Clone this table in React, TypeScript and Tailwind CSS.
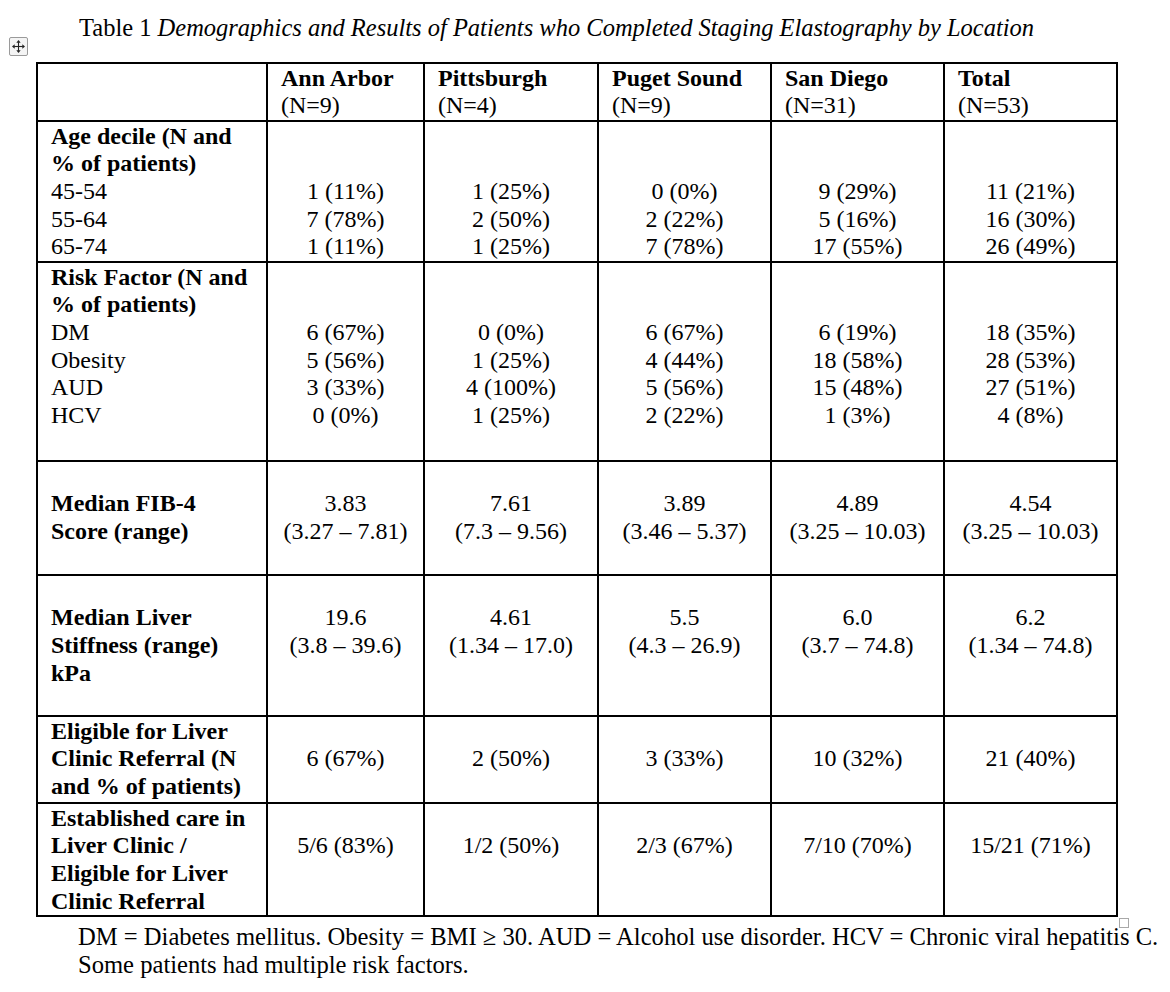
const serif = "font-['Liberation_Serif','Times_New_Roman',serif]";

type Line = string | { b: string } | null;

interface Row {
  h: string;
  label: Line[];
  data: Line[][];
}

const cols = ['w-[230px]', 'w-[157px]', 'w-[174px]', 'w-[173px]', 'w-[173px]', 'w-[173px]'];

const header = [
  ['Ann Arbor', '(N=9)'],
  ['Pittsburgh', '(N=4)'],
  ['Puget Sound', '(N=9)'],
  ['San Diego', '(N=31)'],
  ['Total', '(N=53)'],
];

const rows: Row[] = [
  {
    h: 'h-[141px]',
    label: [{ b: 'Age decile (N and' }, { b: '% of patients)' }, '45-54', '55-64', '65-74'],
    data: [
      [null, null, '1 (11%)', '7 (78%)', '1 (11%)'],
      [null, null, '1 (25%)', '2 (50%)', '1 (25%)'],
      [null, null, '0 (0%)', '2 (22%)', '7 (78%)'],
      [null, null, '9 (29%)', '5 (16%)', '17 (55%)'],
      [null, null, '11 (21%)', '16 (30%)', '26 (49%)'],
    ],
  },
  {
    h: 'h-[199px]',
    label: [{ b: 'Risk Factor (N and' }, { b: '% of patients)' }, 'DM', 'Obesity', 'AUD', 'HCV'],
    data: [
      [null, null, '6 (67%)', '5 (56%)', '3 (33%)', '0 (0%)'],
      [null, null, '0 (0%)', '1 (25%)', '4 (100%)', '1 (25%)'],
      [null, null, '6 (67%)', '4 (44%)', '5 (56%)', '2 (22%)'],
      [null, null, '6 (19%)', '18 (58%)', '15 (48%)', '1 (3%)'],
      [null, null, '18 (35%)', '28 (53%)', '27 (51%)', '4 (8%)'],
    ],
  },
  {
    h: 'h-[114px]',
    label: [null, { b: 'Median FIB-4' }, { b: 'Score (range)' }],
    data: [
      [null, '3.83', '(3.27 – 7.81)'],
      [null, '7.61', '(7.3 – 9.56)'],
      [null, '3.89', '(3.46 – 5.37)'],
      [null, '4.89', '(3.25 – 10.03)'],
      [null, '4.54', '(3.25 – 10.03)'],
    ],
  },
  {
    h: 'h-[141px]',
    label: [null, { b: 'Median Liver' }, { b: 'Stiffness (range)' }, { b: 'kPa' }],
    data: [
      [null, '19.6', '(3.8 – 39.6)'],
      [null, '4.61', '(1.34 – 17.0)'],
      [null, '5.5', '(4.3 – 26.9)'],
      [null, '6.0', '(3.7 – 74.8)'],
      [null, '6.2', '(1.34 – 74.8)'],
    ],
  },
  {
    h: 'h-[87px]',
    label: [{ b: 'Eligible for Liver' }, { b: 'Clinic Referral (N' }, { b: 'and % of patients)' }],
    data: [
      [null, '6 (67%)'],
      [null, '2 (50%)'],
      [null, '3 (33%)'],
      [null, '10 (32%)'],
      [null, '21 (40%)'],
    ],
  },
  {
    h: 'h-[107px]',
    label: [
      { b: 'Established care in' },
      { b: 'Liver Clinic /' },
      { b: 'Eligible for Liver' },
      { b: 'Clinic Referral' },
    ],
    data: [
      [null, '5/6 (83%)'],
      [null, '1/2 (50%)'],
      [null, '2/3 (67%)'],
      [null, '7/10 (70%)'],
      [null, '15/21 (71%)'],
    ],
  },
];

function Lines({ lines }: { lines: Line[] }) {
  return (
    <>
      {lines.map((l, i) => {
        if (l === null) return <div key={i}>&nbsp;</div>;
        if (typeof l === 'string') return <div key={i}>{l}</div>;
        return (
          <div key={i} className="font-bold">
            {l.b}
          </div>
        );
      })}
    </>
  );
}

function MoveHandle() {
  return (
    <div className="absolute left-[9px] top-[37px] flex h-[19px] w-[19px] items-center justify-center rounded-[2px] border border-[#9a9a9a] bg-[#f4f4f4]">
      <svg width="13" height="13" viewBox="0 0 12 12" fill="#222">
        <rect x="5.5" y="2" width="1" height="8" />
        <rect x="2" y="5.5" width="8" height="1" />
        <polygon points="6,0 4,2.5 8,2.5" />
        <polygon points="6,12 4,9.5 8,9.5" />
        <polygon points="0,6 2.5,4 2.5,8" />
        <polygon points="12,6 9.5,4 9.5,8" />
      </svg>
    </div>
  );
}

export default function App() {
  return (
    <div className={`relative h-[992px] w-[1170px] bg-white text-black ${serif} text-[24px] leading-[27.6px]`}>
      <MoveHandle />

      <p className="pl-[79px] pt-[14px] text-[24.5px]">
        Table 1 <i>Demographics and Results of Patients who Completed Staging Elastography by Location</i>
      </p>

      <div className="relative ml-[36px] mt-[20px] w-[1082px]">
        <table className="w-[1082px] table-fixed border-collapse border-2 border-black">
          <colgroup>
            {cols.map((c, i) => (
              <col key={i} className={c} />
            ))}
          </colgroup>
          <tbody>
            <tr className="h-[58px]">
              <td className="border-2 border-black" />
              {header.map(([name, n]) => (
                <td key={name} className="border-2 border-black px-[13px] pt-[1px] align-top">
                  <div className="font-bold">{name}</div>
                  <div>{n}</div>
                </td>
              ))}
            </tr>
            {rows.map((r, ri) => (
              <tr key={ri} className={r.h}>
                <td className="border-2 border-black px-[13px] pt-[1px] align-top">
                  <Lines lines={r.label} />
                </td>
                {r.data.map((d, di) => (
                  <td key={di} className="border-2 border-black px-[6px] pt-[1px] text-center align-top">
                    <Lines lines={d} />
                  </td>
                ))}
              </tr>
            ))}
          </tbody>
        </table>
        {/* end-of-row marker */}
        <div className="absolute -right-[11px] bottom-[-11px] z-10 h-[10px] w-[10px] border border-[#a8a8a8] bg-white" />
      </div>

      <div className="relative pl-[78px] pt-[6px] text-[24.6px]">
        <p>
          DM = Diabetes mellitus. Obesity = BMI ≥ 30. AUD = Alcohol use disorder. HCV = Chronic viral hepatitis C.
        </p>
        <p>Some patients had multiple risk factors.</p>
      </div>
    </div>
  );
}
